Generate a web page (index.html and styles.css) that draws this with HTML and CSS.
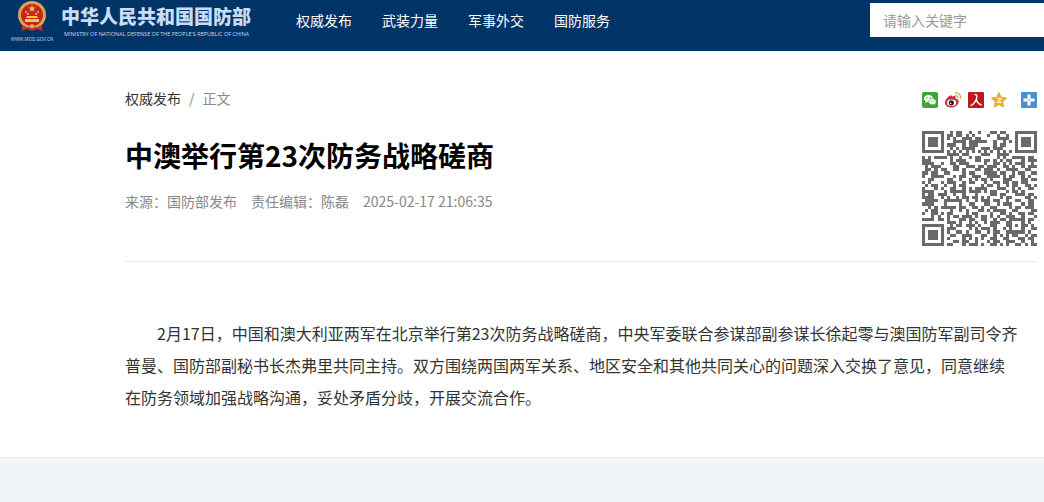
FILE: index.html
```html
<!DOCTYPE html>
<html lang="zh-CN">
<head>
    <meta charset="UTF-8">
    <meta name="viewport" content="width=device-width, initial-scale=1.0">
    <title>中澳举行第23次防务战略磋商</title>
    <link rel="stylesheet" href="styles.css">
</head>
<body>
    <header class="header">
        <a class="logo" href="#">
            <svg viewBox="0 0 504 90">
                <g transform="translate(34 2) scale(2)">
                    <path d="M6 24 L24 24 L26 30 L19 28 L15 30 L11 28 L4 30 Z" fill="#b52f28"/>
                    <circle cx="15" cy="14" r="14" fill="#d9a552"/>
                    <circle cx="15" cy="14" r="11" fill="#c9251d"/>
                    <path d="M15 4l1 2.500h2.600l-2 1.600.8 2.600-2.400-1.500-2.400 1.500.8-2.600-2-1.600h2.600z" fill="#f2c65a"/>
                    <g fill="#f2c65a">
                        <circle cx="9" cy="11" r="1"/>
                        <circle cx="11" cy="13" r="1"/>
                        <circle cx="19" cy="13" r="1"/>
                        <circle cx="21" cy="11" r="1"/>
                        <path d="M10 15h10l1 2H9zM8 18h14v3H8z"/>
                    </g>
                    <path d="M5 24q10 5 20 0l-1 3q-9 3-18 0z" fill="#d0352a"/>
                    <circle cx="15" cy="25" r="2" fill="#e6b24f"/>
                </g>
                <text class="logo-url" x="64" y="82">WWW.MOD.GOV.CN</text>
                <text class="logo-cn" x="122" y="48">中华人民共和国国防部</text>
                <text class="logo-en" x="128" y="71">MINISTRY OF NATIONAL DEFENSE OF THE PEOPLE'S REPUBLIC OF CHINA</text>
            </svg>
        </a>
        <nav class="nav">
            <a href="#">权威发布</a>
            <a href="#">武装力量</a>
            <a href="#">军事外交</a>
            <a href="#">国防服务</a>
        </nav>
        <form class="search">
            <input type="text" placeholder="请输入关键字" aria-label="请输入关键字">
        </form>
    </header>

    <main class="main">
        <div class="article-head">
            <div class="article-info">
                <div class="crumbs"><a href="#">权威发布</a><span>/</span><span>正文</span></div>
                <h1>中澳举行第23次防务战略磋商</h1>
                <div class="meta">
                    <span>来源：国防部发布</span>
                    <span>责任编辑：陈磊</span>
                    <span>2025-02-17 21:06:35</span>
                </div>
            </div>
            <div class="share">
                <div class="share-icons">
                    <a href="#" aria-label="微信">
                        <svg viewBox="0 0 16 16">
                            <rect width="16" height="16" rx="2" fill="#3fa535"/>
                            <path d="M6.500 3C3.900 3 2 4.600 2 6.600c0 1.200.6 2.100 1.600 2.800L3.200 11l1.700-.9 1.600.2C9 10.200 11 8.700 11 6.600S9 3 6.500 3z" fill="#fff"/>
                            <path d="M10.400 6.500C8.300 6.500 6.600 7.900 6.600 9.700s1.700 3.100 3.800 3.100l1.300-.2 1.500.8-.4-1.300c.9-.6 1.400-1.400 1.400-2.400 0-1.800-1.700-3.200-3.800-3.200z" fill="#fff" stroke="#3fa535" stroke-width=".7"/>
                            <g fill="#3fa535">
                                <circle cx="5" cy="5.700" r=".7"/>
                                <circle cx="8" cy="5.700" r=".7"/>
                                <circle cx="9.200" cy="9" r=".6"/>
                                <circle cx="11.700" cy="9" r=".6"/>
                            </g>
                        </svg>
                    </a>
                    <a href="#" aria-label="微博">
                        <svg viewBox="0 0 16 16">
                            <path d="M7 4.500c1.500-.8 3.800-.8 3.800 1l-.2 1.200c1.700.1 3.200 1.100 3.200 2.900 0 3-3.500 5.900-7.200 5.900C2.800 15.500 0 13.600 0 10.700 0 7.800 3.700 3.500 5.800 3.500c1 0 1.200.5 1.200 1z" fill="#c9303c"/>
                            <ellipse cx="6.600" cy="10.700" rx="4.600" ry="3.300" fill="#fff"/>
                            <circle cx="6.300" cy="10.800" r="2.600" fill="#222"/>
                            <circle cx="5.600" cy="11.300" r=".8" fill="#fff"/>
                            <path d="M10 1c3.600-.7 6.300 2.200 5.200 5.500M10.400 3.600c1.800-.3 2.900.9 2.400 2.500" fill="none" stroke="#dca35a" stroke-width="1.200" stroke-linecap="round"/>
                        </svg>
                    </a>
                    <a href="#" aria-label="人民微博">
                        <svg viewBox="0 0 16 16">
                            <rect width="16" height="16" rx="1" fill="#c2161d"/>
                            <path d="M7 2.500c2.500 0 2 2 1.500 4C7.500 10 6 12 3 13.500M8.300 7.500c.8 2.800 2.200 4.500 5.200 5.500" fill="none" stroke="#fff" stroke-width="1.300" stroke-linecap="round"/>
                        </svg>
                    </a>
                    <a href="#" aria-label="QQ空间">
                        <svg viewBox="0 0 16 16">
                            <path d="M8 .6l2.200 4.700 5.400.7-3.900 3.700.9 5.300L8 12.500 3.400 15l.9-5.300L.4 6l5.400-.7z" fill="#eeb02c" stroke="#cf9526" stroke-width=".7"/>
                            <path d="M5.500 6.500h4.500L6.500 10.300h4.500" fill="none" stroke="#fff3c0" stroke-width="1.200"/>
                        </svg>
                    </a>
                    <a class="share-more" href="#" aria-label="更多">
                        <svg viewBox="0 0 16 16">
                            <rect width="16" height="16" rx="1" fill="#4a90d0"/>
                            <path d="M8 2.500v11M2.500 8h11" stroke="#fff" stroke-width="3"/>
                            <path d="M8 7v2" stroke="#4a90d0" stroke-width="1"/>
                        </svg>
                    </a>
                </div>
                <svg class="qr" id="qr" viewBox="0 0 37 37" shape-rendering="crispEdges" role="img" aria-label="二维码"></svg>
            </div>
        </div>
        <article class="article">
            <p>2月17日，中国和澳大利亚两军在北京举行第23次防务战略磋商，中央军委联合参谋部副参谋长徐起零与澳国防军副司令齐普曼、国防部副秘书长杰弗里共同主持。双方围绕两国两军关系、地区安全和其他共同关心的问题深入交换了意见，同意继续在防务领域加强战略沟通，妥处矛盾分歧，开展交流合作。</p>
        </article>
    </main>
    <script src="qr.js"></script>
</body>
</html>
```
FILE: styles.css
```css
* {
    margin: 0;
    padding: 0;
    box-sizing: border-box;
}

body {
    background: #f0f5fa;
    color: #333;
    font-family: "Noto Sans CJK SC", "Liberation Sans", sans-serif;
    font-size: 14px;
}

a {
    color: inherit;
    text-decoration: none;
}

svg {
    display: block;
}

/* Header */
.header {
    display: flex;
    align-items: flex-start;
    height: 51px;
    background: #003366;
    color: #fff;
}

.logo svg {
    width: 252px;
    height: 45px;
    fill: #c8dcf4;
}

.logo-url {
    font: 9px "Open Sans", sans-serif;
    text-anchor: middle;
}

.logo-cn {
    font-size: 38px;
    font-weight: 900;
}

.logo-en {
    font: 11px "Open Sans", sans-serif;
}

.nav {
    display: flex;
    flex: 1;
    gap: 30px;
    padding-left: 44px;
    line-height: 40px;
    white-space: nowrap;
}

.search {
    width: 174px;
    padding-top: 3px;
}

.search input {
    display: block;
    width: 100%;
    height: 34px;
    padding: 0 13px;
    border: 0;
    background: #fff;
    font: inherit;
}

.search input::placeholder {
    color: #999;
}

/* Article */
.main {
    padding: 40px 7px 44px 125px;
    background: #fff;
    border-bottom: 1px solid #e6eaee;
}

.article-head {
    display: flex;
    justify-content: space-between;
    padding-bottom: 15px;
    border-bottom: 1px solid #e8e8e8;
}

.crumbs {
    display: flex;
    gap: 8px;
    line-height: 14px;
    color: #888;
}

.crumbs a {
    color: #333;
}

h1 {
    margin-top: 30px;
    color: #000;
    font-size: 28px;
    line-height: 40px;
}

.meta {
    display: flex;
    gap: 14px;
    margin-top: 14px;
    line-height: 24px;
    color: #888;
}

.share {
    width: 115px;
}

.share-icons {
    display: flex;
    gap: 7px;
    padding-top: 1px;
}

.share-icons svg {
    width: 16px;
    height: 16px;
}

.share-more {
    margin-left: auto;
}

.qr {
    width: 115px;
    height: 115px;
    margin-top: 23px;
    fill: #6a6a6a;
}

.article {
    padding: 55px 18px 0 0;
    font-size: 16px;
    line-height: 32px;
}

.article p {
    text-indent: 2em;
}
```
FILE: qr.js
```js
const rows = [
    '#######..#.##..#..#...##.##...#######',
    '#.....#.##.##.#.#....#..#..#..#.....#',
    '#.###.#.#.#..###.##.....####..#.###.#',
    '#.###.#...####.######..#..#.#.#.###.#',
    '#.###.#.###..#.###.....#.##...#.###.#',
    '#.....#..#.#.####..###.###....#.....#',
    '#######.#.#.#.#.#.#.#.#.#.#.#.#######',
    '........####.##....###..####.........',
    '#.#.####.#..#..#.##.....#.#..####.##.',
    '###......#.###...##.##.#.#.##...#.###',
    '####..#..##.###.....#..##.#.#.###..#.',
    '.#.###....##..###.##.###..##.#..#.###',
    '.##.#.##..##.#...##.###.#..####..##..',
    '##.##..##....#.##...####.##..#.##..##',
    '#..####...#.##..###..####.#.##..#.#..',
    '..##....##..#..#.#.##.#...###...##.##',
    '#.#...#.###..#.##...#..##.##.##.##...',
    '.#.##..#..#.##.....#.##.#..#.##..##.#',
    '#...#.#..##..#.#.####...###..#.#..##.',
    '####...#.#####.####.#.##...#.##.#....',
    '#.##.###..#..#...#....##.##...###.##.',
    '####..#.#..#.##.##.#.#...#.##....##.#',
    '.####..######.#..#.###.##..#..##..##.',
    '####...#....#..##...##..#.###...#.##.',
    '..#.#.#####.##..##.#..##....#.##.###.',
    '.#.##....#..#.#...##.#.####..##....##',
    '#..##.#.##....#.##....#..##.#..##.##.',
    '...#.#..#.##.###.#.##.#.#..###..#...#',
    '####.##.#...##.##..##..#.##.#####.##.',
    '........###.#..#.#..#.###..##...#.#..',
    '#######..#.##.###.#...##...##.#.##.#.',
    '#.....#.###....#.#.###.#..#.#...#..##',
    '#.###.#.#..##.#..##..#.##..######.#..',
    '#.###.#..##..###...##..#.#.#.##..#.##',
    '#.###.#.#....#.#.#.#..##..##...##.##.',
    '#.....#...##.##..#...#.##..###..#..#.',
    '#######.##...#.###.#..##.#.#..##.#.##'
];

// one 1x1 square for each dark module
let d = '';
rows.forEach((row, y) => {
    [...row].forEach((cell, x) => {
        if(cell === '#') d += `M${x} ${y}h1v1h-1z`;
    });
});

const path = document.createElementNS('http://www.w3.org/2000/svg', 'path');
path.setAttribute('d', d);
document.getElementById('qr').appendChild(path);
```
